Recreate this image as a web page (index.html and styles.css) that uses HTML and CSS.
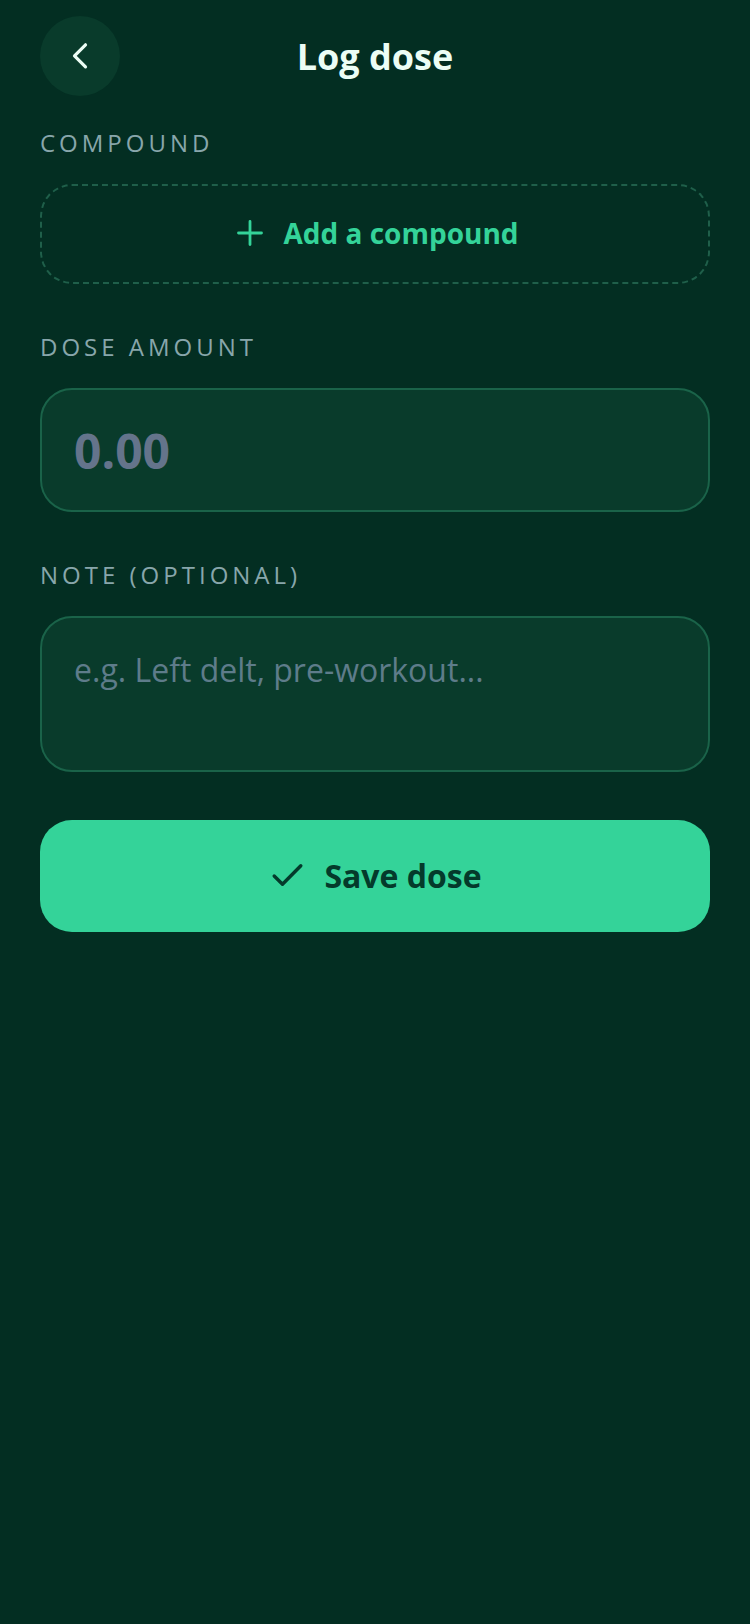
FILE: index.html
```html
<!DOCTYPE html>
<html lang="en">
<head>
<meta charset="utf-8">
<title>Log dose</title>
<link rel="stylesheet" href="styles.css">
</head>
<body>
<main class="screen">
  <header class="topbar">
    <button class="back" aria-label="Back">
      <svg width="32" height="32" viewBox="0 0 32 32" fill="none" stroke="#ecfdf5" stroke-width="3.200" stroke-linecap="round" stroke-linejoin="round"><path d="M21.500 4.800 10.500 15.800 21.500 26.800"/></svg>
    </button>
    <h1 class="title">Log dose</h1>
  </header>

  <section class="field field-compound">
    <div class="label">COMPOUND</div>
    <button class="add">
      <svg width="36" height="28" viewBox="0 0 36 28" fill="none" stroke="#34d399" stroke-width="2.800" stroke-linecap="round"><path d="M19 2.500v23M7.500 14h23"/></svg>
      <span>Add a compound</span>
    </button>
  </section>

  <section class="field field-dose">
    <div class="label">DOSE AMOUNT</div>
    <div class="box amount">0.00</div>
  </section>

  <section class="field field-note">
    <div class="label">NOTE (OPTIONAL)</div>
    <div class="box note">e.g. Left delt, pre-workout...</div>
  </section>

  <button class="save">
    <svg width="36" height="28" viewBox="0 0 36 28" fill="none" stroke="#043a2b" stroke-width="3.400" stroke-linecap="round" stroke-linejoin="round"><path d="M6.200 15 14.500 23.300 32.800 4.700"/></svg>
    <span>Save dose</span>
  </button>
</main>
</body>
</html>
```
FILE: styles.css
```css
* { box-sizing: border-box; }
html, body { margin: 0; padding: 0; }
body {
  width: 750px;
  height: 1624px;
  background: #032e22;
  font-family: "Open Sans", sans-serif;
  overflow: hidden;
}
.screen { padding: 16px 40px 0; display: flex; flex-direction: column; }
.topbar { position: relative; height: 80px; display: flex; align-items: center; justify-content: center; }
.back {
  position: absolute; left: 0; top: 0;
  width: 80px; height: 80px; border: 0; padding: 0; border-radius: 50%;
  background: #093b2b; display: flex; align-items: center; justify-content: center;
}
.title { margin: 2px 0 0; font-size: 36px; line-height: 48px; font-weight: 700; color: #ecfdf5; }
.field { display: flex; flex-direction: column; gap: 26px; }
.field-compound { margin-top: 32px; }
.field-dose { margin-top: 48px; }
.field-note { margin-top: 48px; }
.label { font-size: 24px; line-height: 30px; letter-spacing: 4px; color: #88a6ab; height: 30px; }
.add {
  height: 100px; border: 2px dashed #1f5f4a; border-radius: 32px; background: transparent;
  display: flex; align-items: center; justify-content: center; gap: 16px;
  font-family: inherit; font-size: 28px; font-weight: 700; color: #34d399; padding: 0 0 2px;
}
.box { background: #093b2b; border: 2px solid #1a6349; border-radius: 32px; padding: 0 32px; color: #64748b; }
.amount {
  height: 124px; display: flex; align-items: center;
  font-size: 48px; font-weight: 700;
}
.note { height: 156px; padding-top: 30px; font-size: 32px; line-height: 44px; color: #5e7c8a; }
.save {
  margin-top: 48px; height: 112px; border: 0; border-radius: 32px; background: #34d399;
  display: flex; align-items: center; justify-content: center; gap: 20px;
  font-family: inherit; font-size: 32px; font-weight: 700; color: #043a2b; padding: 0 0 2px;
}
```
